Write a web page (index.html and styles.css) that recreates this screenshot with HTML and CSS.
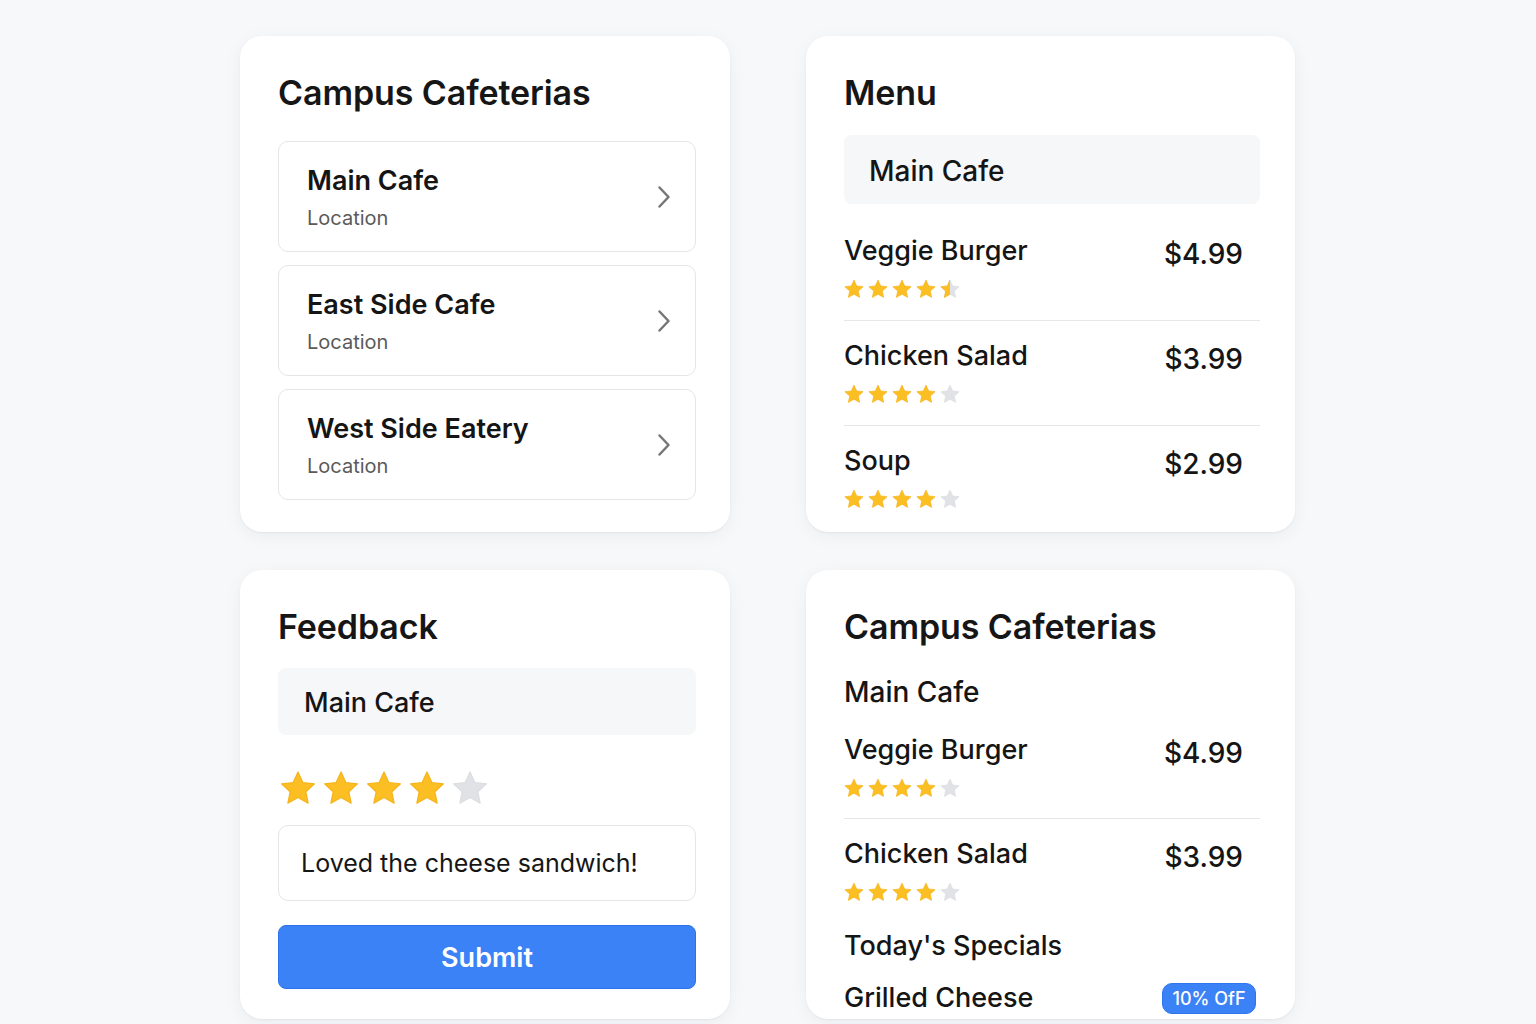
FILE: index.html
```html
<!DOCTYPE html>
<html lang="en">
<head>
<meta charset="utf-8">
<title>Campus Cafeterias</title>
<link rel="stylesheet" href="styles.css">
</head>
<body>
<svg class="defs" width="0" height="0" aria-hidden="true">
  <defs>
    <symbol id="star" viewBox="0 0 24 24">
      <path d="M12 1.3 L15.23 8.35 L22.94 9.25 L17.23 14.5 L18.76 22.1 L12 18.3 L5.24 22.1 L6.77 14.5 L1.06 9.25 L8.77 8.35 Z" stroke-linejoin="round" stroke-width="0.8"/>
    </symbol>
    <clipPath id="halfclip"><rect x="0" y="0" width="12" height="24"/></clipPath>
  </defs>
</svg>

<main class="grid">
  <!-- Card 1 -->
  <section class="card">
    <h2 class="card-title">Campus Cafeterias</h2>
    <ul class="cafe-list">
      <li class="cafe-item">
        <div class="cafe-text">
          <div class="cafe-name">Main Cafe</div>
          <div class="cafe-loc">Location</div>
        </div>
        <svg class="chev" viewBox="0 0 14 24"><path d="M2.5 2.5 L11.5 12 L2.5 21.5"/></svg>
      </li>
      <li class="cafe-item">
        <div class="cafe-text">
          <div class="cafe-name">East Side Cafe</div>
          <div class="cafe-loc">Location</div>
        </div>
        <svg class="chev" viewBox="0 0 14 24"><path d="M2.5 2.5 L11.5 12 L2.5 21.5"/></svg>
      </li>
      <li class="cafe-item">
        <div class="cafe-text">
          <div class="cafe-name">West Side Eatery</div>
          <div class="cafe-loc">Location</div>
        </div>
        <svg class="chev" viewBox="0 0 14 24"><path d="M2.5 2.5 L11.5 12 L2.5 21.5"/></svg>
      </li>
    </ul>
  </section>

  <!-- Card 2 -->
  <section class="card card-right">
    <h2 class="card-title">Menu</h2>
    <div class="select-box menu-select">Main Cafe</div>
    <div class="menu-row first">
      <div class="menu-info">
        <div class="dish">Veggie Burger</div>
        <div class="stars small">
          <svg class="on"><use href="#star"/></svg>
          <svg class="on"><use href="#star"/></svg>
          <svg class="on"><use href="#star"/></svg>
          <svg class="on"><use href="#star"/></svg>
          <svg class="half" viewBox="0 0 24 24"><use class="off" href="#star"/><g clip-path="url(#halfclip)"><use class="on" href="#star"/></g></svg>
        </div>
      </div>
      <div class="price">$4.99</div>
    </div>
    <div class="menu-row">
      <div class="menu-info">
        <div class="dish">Chicken Salad</div>
        <div class="stars small">
          <svg class="on"><use href="#star"/></svg>
          <svg class="on"><use href="#star"/></svg>
          <svg class="on"><use href="#star"/></svg>
          <svg class="on"><use href="#star"/></svg>
          <svg class="off"><use href="#star"/></svg>
        </div>
      </div>
      <div class="price">$3.99</div>
    </div>
    <div class="menu-row last">
      <div class="menu-info">
        <div class="dish">Soup</div>
        <div class="stars small">
          <svg class="on"><use href="#star"/></svg>
          <svg class="on"><use href="#star"/></svg>
          <svg class="on"><use href="#star"/></svg>
          <svg class="on"><use href="#star"/></svg>
          <svg class="off"><use href="#star"/></svg>
        </div>
      </div>
      <div class="price">$2.99</div>
    </div>
  </section>

  <!-- Card 3 -->
  <section class="card">
    <h2 class="card-title">Feedback</h2>
    <div class="select-box feedback-select">Main Cafe</div>
    <div class="stars big">
      <svg class="on"><use href="#star"/></svg>
      <svg class="on"><use href="#star"/></svg>
      <svg class="on"><use href="#star"/></svg>
      <svg class="on"><use href="#star"/></svg>
      <svg class="off"><use href="#star"/></svg>
    </div>
    <div class="text-input">Loved the cheese sandwich!</div>
    <button class="submit" type="button">Submit</button>
  </section>

  <!-- Card 4 -->
  <section class="card card-right clip">
    <h2 class="card-title">Campus Cafeterias</h2>
    <div class="subhead">Main Cafe</div>
    <div class="menu-row compact compact-first">
      <div class="menu-info">
        <div class="dish">Veggie Burger</div>
        <div class="stars small">
          <svg class="on"><use href="#star"/></svg>
          <svg class="on"><use href="#star"/></svg>
          <svg class="on"><use href="#star"/></svg>
          <svg class="on"><use href="#star"/></svg>
          <svg class="off"><use href="#star"/></svg>
        </div>
      </div>
      <div class="price">$4.99</div>
    </div>
    <div class="menu-row compact last">
      <div class="menu-info">
        <div class="dish">Chicken Salad</div>
        <div class="stars small">
          <svg class="on"><use href="#star"/></svg>
          <svg class="on"><use href="#star"/></svg>
          <svg class="on"><use href="#star"/></svg>
          <svg class="on"><use href="#star"/></svg>
          <svg class="off"><use href="#star"/></svg>
        </div>
      </div>
      <div class="price">$3.99</div>
    </div>
    <div class="subhead specials">Today's Specials</div>
    <div class="special-row">
      <div class="dish">Grilled Cheese</div>
      <span class="badge">10% OfF</span>
    </div>
  </section>
</main>
</body>
</html>
```

FILE: styles.css
```css
* { box-sizing: border-box; }

html, body {
  margin: 0;
  padding: 0;
}

body {
  background: #f7f8fa;
  font-family: Inter, "Noto Sans", "Liberation Sans", sans-serif;
  color: #161616;
  height: 1024px;
  overflow: hidden;
}

.defs {
  position: absolute;
  width: 0;
  height: 0;
  overflow: hidden;
}

.grid {
  width: 1056px;
  margin: 36px auto 0;
  display: grid;
  grid-template-columns: 490px 489px;
  grid-template-rows: 496px 449px;
  column-gap: 76px;
  row-gap: 38px;
}

.card {
  background: #fff;
  border-radius: 22px;
  padding: 37px 34px 0 38px;
  box-shadow: 0 1px 2px rgba(16, 24, 40, 0.05), 0 4px 18px rgba(16, 24, 40, 0.05);
}

.card.card-right { padding-right: 35px; }

.card.clip { overflow: hidden; }

.card-title {
  margin: 0;
  font-size: 34px;
  line-height: 40px;
  font-weight: 600;
  letter-spacing: -0.1px;
  color: #161616;
}

/* Cafe list */
.cafe-list {
  list-style: none;
  margin: 28px 0 0;
  padding: 0;
  display: flex;
  flex-direction: column;
  gap: 13px;
}

.cafe-item {
  height: 111px;
  border: 1px solid #e4e6ea;
  border-radius: 10px;
  padding: 0 24px 0 28px;
  display: flex;
  align-items: center;
  justify-content: space-between;
}

.cafe-name {
  font-size: 27px;
  line-height: 34px;
  font-weight: 600;
  color: #151515;
}

.cafe-loc {
  margin-top: 8px;
  font-size: 20px;
  line-height: 24px;
  color: #5a5a5a;
}

.chev {
  width: 14px;
  height: 24px;
  fill: none;
  stroke: #777;
  stroke-width: 2.5;
  stroke-linecap: round;
  stroke-linejoin: round;
}

/* Select boxes */
.select-box {
  background: #f6f7f9;
  border-radius: 8px;
  font-size: 28px;
  line-height: 34px;
  font-weight: 500;
  color: #151515;
}

.menu-select {
  margin-top: 22px;
  height: 69px;
  padding: 19px 25px 0;
}

.feedback-select {
  margin-top: 21px;
  height: 67px;
  padding: 18px 26px 0;
  font-size: 27px;
}

/* Menu rows */
.menu-row {
  display: flex;
  justify-content: space-between;
  align-items: flex-start;
  padding: 18px 17px 21px 0;
  border-bottom: 1px solid #e6e7ea;
}

.menu-row.first { margin-top: 12px; }
.menu-row.last { border-bottom: none; }

.dish {
  font-size: 27px;
  line-height: 34px;
  font-weight: 500;
  color: #151515;
}

.price {
  margin-top: 3px;
  font-size: 28px;
  line-height: 34px;
  font-weight: 500;
  color: #151515;
}

.stars {
  display: flex;
}

.stars svg .on, .stars svg.on { fill: #fbbf24; stroke: #f5b31a; }
.stars svg .off, .stars svg.off { fill: #e1e2e6; stroke: #dcdde1; }

.stars.small {
  margin-top: 11px;
  gap: 4px;
}

.stars.small svg {
  width: 20px;
  height: 20px;
}

.stars.big {
  margin-top: 35px;
  margin-left: 2px;
  gap: 7px;
}

.stars.big svg {
  width: 36px;
  height: 36px;
}

/* Feedback */
.text-input {
  margin-top: 19px;
  height: 76px;
  border: 1px solid #e4e6ea;
  border-radius: 10px;
  padding: 0 22px;
  display: flex;
  align-items: center;
  font-size: 25px;
  color: #161616;
}

.submit {
  margin-top: 24px;
  width: 100%;
  height: 64px;
  border: 1px solid #2c72ec;
  border-radius: 8px;
  background: #3b82f6;
  color: #fff;
  font-family: inherit;
  font-size: 27px;
  font-weight: 600;
  cursor: pointer;
}

/* Card 4 */
.subhead {
  margin-top: 28px;
  font-size: 28px;
  line-height: 34px;
  font-weight: 500;
  color: #151515;
}

.menu-row.compact {
  padding-bottom: 20px;
}

.menu-row.compact-first { margin-top: 6px; }

.subhead.specials {
  margin-top: 7px;
  font-size: 27px;
}

.special-row {
  margin-top: 18px;
  display: flex;
  justify-content: space-between;
  align-items: center;
  padding-right: 4px;
}

.badge {
  display: inline-flex;
  align-items: center;
  justify-content: center;
  width: 94px;
  height: 31px;
  border-radius: 10px;
  background: #3b82f6;
  border: 1px solid #2f76ee;
  color: #fff;
  font-size: 18px;
  font-weight: 500;
}
```
